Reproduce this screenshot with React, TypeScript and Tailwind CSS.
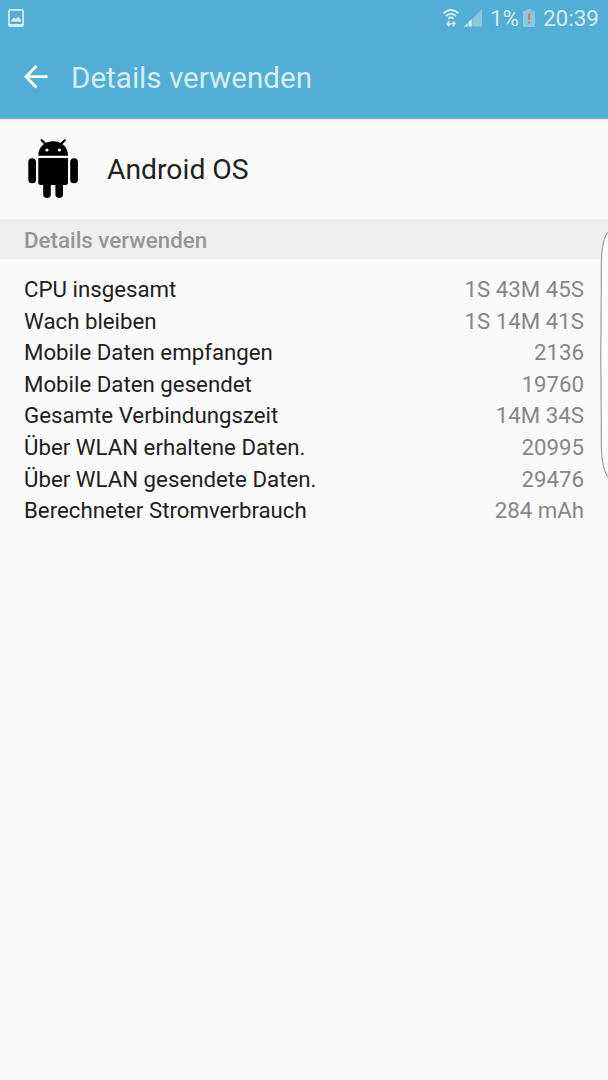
const usage = [
  { label: 'CPU insgesamt', value: '1S 43M 45S' },
  { label: 'Wach bleiben', value: '1S 14M 41S' },
  { label: 'Mobile Daten empfangen', value: '2136' },
  { label: 'Mobile Daten gesendet', value: '19760' },
  { label: 'Gesamte Verbindungszeit', value: '14M 34S' },
  { label: 'Über WLAN erhaltene Daten.', value: '20995' },
  { label: 'Über WLAN gesendete Daten.', value: '29476' },
  { label: 'Berechneter Stromverbrauch', value: '284 mAh' },
];

function IconPicture() {
  return (
    <svg className="w-4 h-[18px]" viewBox="0 0 16 18" fill="none">
      <rect x="0.9" y="0.9" width="14.2" height="16.2" rx="0.8" stroke="#d6edf6" strokeWidth="1.7" />
      <path d="M1 15h14v2H1z" fill="#d6edf6" />
      <path d="M3.5 12.8V11l2.3-2.400 2 1.200L10.3 7.800l2.500 2.800v2.200z" fill="#d6edf6" />
    </svg>
  );
}

function IconWifi() {
  return (
    <svg className="w-4 h-[18px]" viewBox="0 0 16 18" fill="none" stroke="#d6edf6" strokeWidth="1.9">
      <path d="M.6 4.2Q8-2.4 15.4 4.2M3 7.1Q8 2.6 13 7.1M5.4 9.7Q8 7.4 10.6 9.7" />
      <path d="M5.6 12v3.500M10.6 17.500v-3.500" />
      <path d="M2.8 14.4h5.6L5.6 17.700zM7.8 15.2h5.600L10.6 12z" fill="#d6edf6" stroke="none" />
    </svg>
  );
}

function IconSignal() {
  return (
    <svg className="w-[18px] h-[18px]" viewBox="0 0 18 18">
      <path d="M8.300 9.700 18 0v17.500H8.300z" fill="#8ac8e1" />
      <path d="M0 17.500 3.600 14v3.500zM4.700 13l3-2.900v7.400h-3z" fill="#e4f3f9" />
    </svg>
  );
}

function IconBattery() {
  return (
    <svg className="w-3 h-[18px]" viewBox="0 0 12 18">
      <path d="M0 1.8h3.6V0h4.8v1.8H12V18H0z" fill="#8ac8e1" />
      <path d="M4.9 4.4h2.500l-.5 6.8H5.300zM5.100 12.400h2v2.200h-2z" fill="#dc7050" />
    </svg>
  );
}

function IconAndroid() {
  return (
    <svg className="w-[50px] h-[60px]" viewBox="0 0 50 60">
      <path d="M10.300 16.800C10.300 8 16.500 2.300 25.200 2.300S40 8 40 16.800z" />
      <path d="m18 5.500-4.300-4.300M32.500 5.500l4.300-4.300" stroke="#000" strokeWidth="2.200" strokeLinecap="round" />
      <circle cx="19" cy="11" r="1.600" fill="#fafafa" />
      <circle cx="31.400" cy="11" r="1.600" fill="#fafafa" />
      <rect x="0.300" y="19.300" width="7.700" height="25" rx="3.850" />
      <rect x="42.200" y="19.300" width="7.700" height="25" rx="3.850" />
      <path d="M10.300 19H40v24.500a2.500 2.500 0 0 1-2.500 2.500H12.800a2.500 2.500 0 0 1-2.500-2.500z" />
      <rect x="15.200" y="38" width="7.600" height="21" rx="3.800" />
      <rect x="27.400" y="38" width="7.600" height="21" rx="3.800" />
    </svg>
  );
}

export default function App() {
  return (
    <div className="relative w-[608px] h-[1080px] overflow-hidden bg-[#fafafa] font-[Roboto,sans-serif]">
      <header className="h-[118px] bg-[#52aed5] shadow-[0_1px_1px_rgba(0,0,0,0.35)]">
        <div className="flex h-9 items-center pl-2 pr-[9px] text-[22.5px] leading-9 text-[#d6edf6]">
          <IconPicture />
          <div className="ml-auto flex items-center whitespace-nowrap">
            <IconWifi />
            <span className="ml-[5px]"><IconSignal /></span>
            <span className="ml-2 w-[29px]">1%</span>
            <span className="ml-1"><IconBattery /></span>
            <span className="ml-2">20:39</span>
          </div>
        </div>
        <div className="flex h-[82px] items-center pl-6">
          <svg className="w-6 h-6" viewBox="0 0 24 24" fill="none" stroke="#fff" strokeWidth="2.800">
            <path d="M12.500 1 1.900 11.700l10.600 10.700M2 11.700h21.500" />
          </svg>
          <h1 className="ml-[23px] pt-0.5 text-[29.6px] leading-9 text-[#d6edf6]">Details verwenden</h1>
        </div>
      </header>

      <div className="flex h-[101px] items-center pl-7">
        <IconAndroid />
        <span className="ml-[29px] pt-0.5 text-[28.3px] leading-9 text-[#212121]">Android OS</span>
      </div>

      <h2 className="h-10 bg-[#efefef] pl-6 text-[22.3px] font-medium leading-[43px] text-[#969696]">
        Details verwenden
      </h2>

      <dl className="pt-[15px] px-6 text-[22.25px] leading-[31.6px]">
        {usage.map(row => (
          <div key={row.label} className="flex justify-between">
            <dt className="text-[#212121]">{row.label}</dt>
            <dd className="text-[#868686]">{row.value}</dd>
          </div>
        ))}
      </dl>

      {/* edge panel handle */}
      <svg className="absolute right-0 top-[228px] w-2 h-[254px]" viewBox="0 0 8 254">
        <path d="M9 3C4 8 1.500 20 1.300 35L.8 127l.5 90C1.500 233 4 245 9 250" fill="#fcfcfc" stroke="#8a8a8a" strokeWidth="1" />
      </svg>
    </div>
  );
}
